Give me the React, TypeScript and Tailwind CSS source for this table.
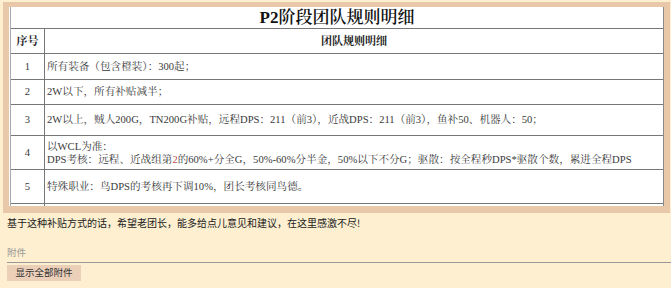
import React from "react";

const serif = { fontFamily: '"Liberation Serif", "Noto Serif CJK SC", "Noto Sans CJK SC", serif' };
const sans = { fontFamily: '"Noto Sans CJK SC", "Noto Sans", sans-serif' };

const rows: { n: string; h: string; content: React.ReactNode }[] = [
  { n: "1", h: "h-[26px]", content: "所有装备（包含橙装）：300起；" },
  { n: "2", h: "h-[25px]", content: "2W以下，所有补贴减半；" },
  {
    n: "3",
    h: "h-[31px]",
    content: "2W以上，贼人200G，TN200G补贴，远程DPS：211（前3），近战DPS：211（前3），鱼补50、机器人：50；",
  },
  {
    n: "4",
    h: "h-[34px]",
    content: (
      <div className="flex flex-col leading-[13px]">
        <span>以WCL为准：</span>
        <span>
          DPS考核：远程、近战组第<span className="text-[#c0504d]">2</span>的60%+分全G，50%-60%分半金，50%以下不分G；驱散：按全程秒DPS*驱散个数，累进全程DPS
        </span>
      </div>
    ),
  },
  { n: "5", h: "h-[34px]", content: "特殊职业：鸟DPS的考核再下调10%，团长考核同鸟德。" },
];

export default function App() {
  return (
    <div className="w-[671px] h-[288px] bg-[#fdefd0] overflow-hidden pt-[2px] pl-[3px]">
      <div className="w-[667px] h-[211px] border-[6px] border-t-[5px] border-b-[7px] border-[#e8c8a8] bg-white overflow-hidden pl-[1px]" style={serif}>
        <div className="w-[654px] border-l border-r border-l-[#aaa] border-r-[#888] text-[#3a3a3a]">
          <div className="h-[22px] border-b border-[#777] flex items-center justify-center text-[17px] font-semibold text-[#111] leading-none">
            P2阶段团队规则明细
          </div>
          <div className="h-[25px] border-b border-[#777] flex text-[11px] font-bold text-[#222]">
            <div className="w-[34px] border-r border-[#777] flex items-center justify-center">序号</div>
            <div className="flex-1 flex items-center justify-center">团队规则明细</div>
          </div>
          {rows.map((r) => (
            <div key={r.n} className={`${r.h} border-b border-[#777] flex text-[10.6px]`}>
              <div className="w-[34px] border-r border-[#777] flex items-center justify-center">{r.n}</div>
              <div className="flex-1 flex items-center pl-[2px] whitespace-nowrap">{r.content}</div>
            </div>
          ))}
          <div className="h-[20px] flex">
            <div className="w-[34px] border-r border-[#777]"></div>
            <div className="flex-1"></div>
          </div>
        </div>
      </div>
      <div className="pl-[4px] text-[#222]" style={sans}>
        <div className="h-[22px] flex items-center text-[10px] leading-none mt-[-1px]">
          基于这种补贴方式的话，希望老团长，能多给点儿意见和建议，在这里感激不尽!
        </div>
        <div className="mt-[10px] h-[19px] border-b border-[#999] flex items-center text-[9.5px] text-[#999] leading-none">
          附件
        </div>
        <div className="mt-[2px] w-[74px] h-[16px] bg-[#eccfb9] flex items-center justify-center text-[9.5px] text-[#333] leading-none">
          显示全部附件
        </div>
      </div>
    </div>
  );
}
